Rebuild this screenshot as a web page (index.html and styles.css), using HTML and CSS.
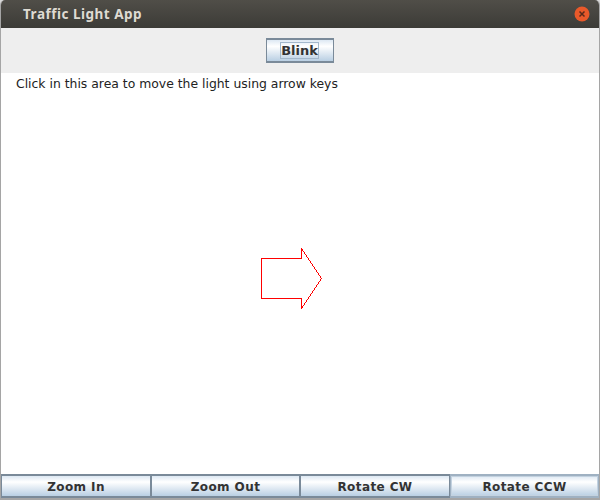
FILE: index.html
```html
<!DOCTYPE html>
<html lang="en">
  <head>
    <meta charset="UTF-8" />
    <title>Traffic Light App</title>
    <link rel="stylesheet" href="styles.css">
  </head>
  <body>
    <div class="window">
      <div class="titlebar">
        <span class="title">Traffic Light App</span>
        <svg class="close" width="16" height="16" viewBox="0 0 16 16">
          <circle cx="8" cy="8" r="7.5" fill="#e9592a" />
          <path d="M5.5 5.5l5 5M10.5 5.5l-5 5" stroke="#5a2a1a" stroke-width="1.5" fill="none" />
        </svg>
      </div>
      <div class="toolbar">
        <button class="btn blink-btn"><span class="focus-ring">Blink</span></button>
      </div>
      <div class="canvas">
        <p class="hint">Click in this area to move the light using arrow keys</p>
        <svg class="arrow" width="62" height="62" viewBox="0 0 62 62">
          <polygon points="0.5,10.5 40.5,10.5 40.5,0.5 60.5,30.5 40.5,60.5 40.5,50.5 0.5,50.5" fill="none" stroke="#ff0000" shape-rendering="crispEdges" />
        </svg>
      </div>
      <div class="controls">
        <button class="btn control">Zoom In</button>
        <button class="btn control">Zoom Out</button>
        <button class="btn control">Rotate CW</button>
        <button class="btn control focused">Rotate CCW</button>
      </div>
    </div>
  </body>
</html>
```

FILE: styles.css
```css
html,
body {
  margin: 0;
  padding: 0;
  height: 100%;
  background-color: #d9d9d9;
}

.window {
  display: flex;
  flex-direction: column;
  width: 600px;
  height: 500px;
  box-sizing: border-box;
  border-left: 1px solid #a5a5a5;
  border-right: 1px solid #a5a5a5;
  border-bottom: 2px solid #a5a5a5;
  border-radius: 5px 5px 0 0;
  overflow: hidden;
  background-color: #fff;
  font-family: "DejaVu Sans", sans-serif;
}

.titlebar {
  display: flex;
  align-items: center;
  justify-content: space-between;
  height: 28px;
  flex-shrink: 0;
  margin: 0 -1px;
  padding: 0 10px 0 23px;
  box-sizing: border-box;
  background: linear-gradient(#504e48, #3c3b37);
}

.title {
  font-family: "Noto Sans", sans-serif;
  font-weight: 700;
  font-size: 13.5px;
  letter-spacing: 0.5px;
  color: #dfdbd2;
}

.toolbar {
  display: flex;
  justify-content: center;
  align-items: center;
  height: 45px;
  flex-shrink: 0;
  padding-right: 1px;
  box-sizing: border-box;
  background-color: #eeeeee;
}

.btn {
  border: 1px solid #7a8a99;
  background: linear-gradient(#dde8f3, #ffffff 30%, #b9cfe3);
  font-family: "DejaVu Sans", sans-serif;
  font-weight: 700;
  font-size: 13px;
  color: #333333;
  padding: 0;
}

.blink-btn {
  width: 68px;
  height: 25px;
  border-width: 2px 1px;
  display: flex;
  align-items: center;
  justify-content: center;
}

.focus-ring {
  border: 1px solid #a3b8cc;
  line-height: 15px;
  padding: 0;
}

.canvas {
  position: relative;
  flex: 1;
}

.hint {
  margin: 3px 0 0 15px;
  font-size: 12.4px;
  line-height: 16px;
  color: #222222;
}

.arrow {
  position: absolute;
  left: 260px;
  top: 175px;
}

.controls {
  display: grid;
  grid-template-columns: 150px 149px 150px 149px;
  height: 24px;
  flex-shrink: 0;
}

.control {
  border-width: 2px 1px;
  padding-top: 1px;
  font-size: 12px;
  letter-spacing: 0.4px;
}

.focused {
  border-color: #9fb1c2;
  box-shadow: inset 0 0 0 1px #c3d2e0;
}
```
